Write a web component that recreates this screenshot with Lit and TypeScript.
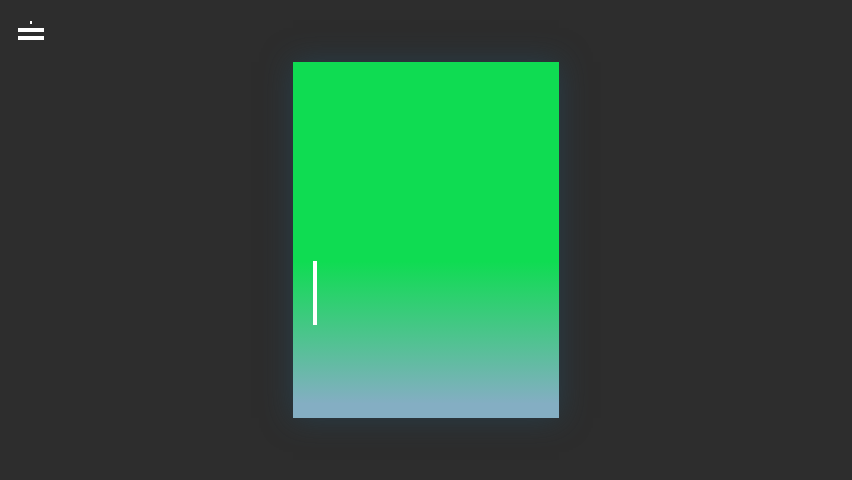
import { LitElement, html, css } from "lit";
import { customElement } from "lit/decorators.js";

@customElement("app-root")
export class AppRoot extends LitElement {
  static styles = css`
    :host {
      display: grid;
      width: 852px;
      height: 480px;
      background: #2d2d2d;
      overflow: hidden;
    }
    .menu {
      grid-area: 1 / 1;
      place-self: start;
      margin: 21px 0 0 18px;
      width: 26px;
      display: flex;
      flex-direction: column;
      align-items: center;
    }
    .dot {
      width: 2px;
      height: 3px;
      background: #fff;
      margin-bottom: 4px;
    }
    .line {
      width: 26px;
      height: 4px;
      background: #fff;
      margin-bottom: 4px;
    }
    .card {
      grid-area: 1 / 1;
      place-self: start center;
      margin-top: 62px;
      width: 266px;
      height: 356px;
      box-sizing: border-box;
      padding: 199px 0 0 20px;
      background: linear-gradient(
        180deg,
        #0fdc52 0%,
        #0fdc52 56%,
        #84aec3 96%,
        #84aec3 100%
      );
      box-shadow: 0 0 28px rgba(36, 72, 92, 0.62);
    }
    .bar {
      width: 4px;
      height: 64px;
      background: #fff;
    }
  `;

  render() {
    return html`
      <div class="card"><div class="bar"></div></div>
      <div class="menu">
        <div class="dot"></div>
        <div class="line"></div>
        <div class="line"></div>
      </div>
    `;
  }
}
